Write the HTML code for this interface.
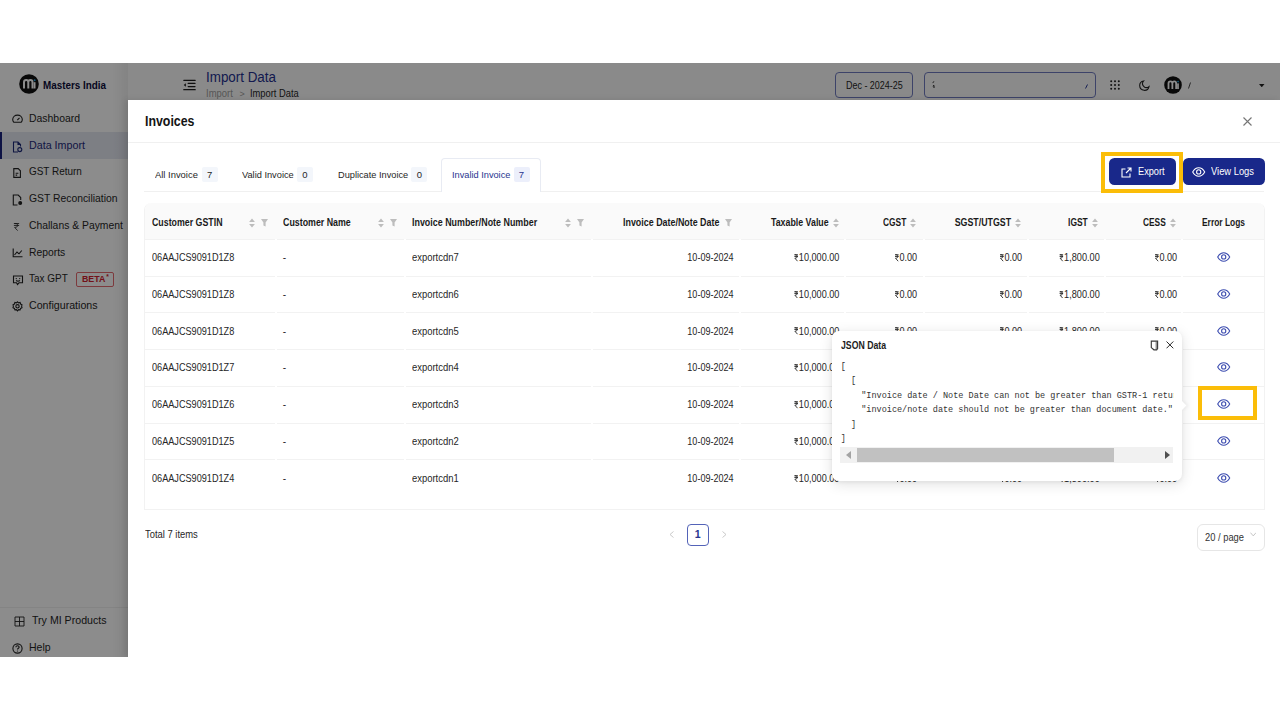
<!DOCTYPE html>
<html><head><meta charset="utf-8"><title>Invoices</title><style>
*{box-sizing:border-box;margin:0;padding:0}
html,body{width:1280px;height:720px;overflow:hidden;background:#fff;font-family:"Liberation Sans",sans-serif;color:#222}
div{position:absolute}
.t{white-space:nowrap}
.bl{display:inline-block;width:0;height:0;vertical-align:baseline}
.ico{line-height:0}.ico svg{display:block}
.side{left:0;top:63px;width:128px;height:594px;background:#fff}
.active-bg{left:0;top:132.3px;width:128px;height:26.5px;background:#e4e7f1}
.active-bar{left:0;top:132.3px;width:2px;height:26.5px;background:#1a237e}
.beta{left:75.8px;top:272px;width:38.3px;height:15px;border:1px solid #e46a70;border-radius:2px;color:#d0202e;font-size:8.8px;font-weight:700;padding:1.3px 0 0 5.2px;white-space:nowrap}
.beta span{position:absolute;left:29.5px;top:-0.5px;font-size:6.5px}
.sdiv{left:0;top:607px;width:128px;height:1px;background:#f0f0f0}
.hdr{left:128px;top:63px;width:1152px;height:37px;background:#fcfcfc}
.hbox{top:72.3px;height:26px;border:1.2px solid #6f7bc0;border-radius:4px}
.mask{left:0;top:63px;width:1280px;height:594px;background:rgba(0,0,0,0.45)}
.sideshadow{left:112px;top:63px;width:16px;height:594px;background:linear-gradient(to right,rgba(0,0,0,0),rgba(0,0,0,0.06))}
.drawer{left:128px;top:100px;width:1152px;height:557px;background:#fff;box-shadow:-3px 0 6px rgba(0,0,0,0.1)}
.ddiv{left:128px;top:141.5px;width:1152px;height:1px;background:#f0f0f0}
.tabline{left:144.2px;top:191px;width:1120.3px;height:1px;background:#f0f0f0}
.tabact{left:440.5px;top:158.3px;width:100px;height:33.5px;border:1px solid #e8ebf3;border-bottom:none;border-radius:4px 4px 0 0;background:#fff}
.badge{top:167px;width:16px;height:15.3px;background:#f3f6fb;border-radius:2px}
.badge.act{background:#eceffb}
.btn{top:158.4px;height:26.8px;background:#19288a;border-radius:5.5px}
.ybox{border:4px solid #fbbd08}
.tbl{border:1px solid #f2f2f2;border-top:none;border-radius:7px 7px 0 0;background:#fff}
.thead{background:#fafafa;border-radius:7px 7px 0 0}
.hl{height:1px;background:#f2f2f2}
.gap{width:2px;height:1px;background:#fff}
.rs{display:inline-block;vertical-align:baseline;margin-right:0.5px;position:relative;top:0.5px}
.pg1{left:687px;top:524.2px;width:21.6px;height:21.4px;border:1px solid #5363b8;border-radius:4px}
.psize{left:1197.3px;top:524.2px;width:67.3px;height:26.8px;border:1px solid #e6e6e6;border-radius:6px}
.pop{left:832px;top:330.6px;width:350px;height:150px;background:#fff;border-radius:7px;box-shadow:0 3px 14px rgba(0,0,0,0.12),0 1px 4px rgba(0,0,0,0.06)}
.parrow{left:345.5px;top:71.5px;width:7px;height:7px;background:#fff;transform:rotate(45deg);box-shadow:2px -2px 3px rgba(0,0,0,0.04)}
.pcode{left:840.8px;top:359.5px;width:333.1px;height:88px;overflow:hidden}
.pcode pre{font-family:"Liberation Mono",monospace;font-size:8.535px;line-height:14.6px;color:#333}
.sbar{left:840.4px;top:447.3px;width:333px;height:15.8px;background:#f1f1f1}
.sthumb{left:16.6px;top:0.8px;width:256.6px;height:13.9px;background:#c1c1c1}
</style></head>
<body>
<div style="left:0;top:63px;width:1280px;height:594px;overflow:hidden"><div style="left:0;top:-63px;width:1280px;height:720px">
<div class="side"></div>
<div class="ico" style="left:18.8px;top:73.5px"><svg width="20" height="20" viewBox="0 0 20 20"><circle cx="10" cy="10" r="9.8" fill="#111"/><path d="M5 14.5V8.2C5 6.8 6 6 7.2 6S9.3 6.8 9.3 8.2V14.5M9.3 8.2C9.3 6.8 10.3 6 11.5 6S13.5 6.8 13.5 8.2V14.5" fill="none" stroke="#fff" stroke-width="2"/><rect x="14.6" y="8.2" width="1.9" height="6.3" fill="#fff"/><circle cx="15.6" cy="6.2" r="1" fill="#29a8e0"/></svg></div>
<div class="t" id="t0" style="left:43.25px;font-size:11px;line-height:14px;font-weight:700;color:#0d0d3a;top:77.80px;transform:scaleX(0.8960);transform-origin:left center;">Masters India</div>
<div class="active-bg"></div><div class="active-bar"></div>
<div class="t" id="t1" style="left:29.3px;font-size:10.9px;line-height:14px;font-weight:400;color:#262626;top:111.01px;transform:scaleX(0.9572);transform-origin:left center;">Dashboard</div>
<div class="ico" style="left:11.5px;top:114.0px"><svg width="11" height="9" viewBox="0 0 11 9"><path d="M1.8 8.2C0.9 7.6 0.7 6.6 0.7 5.6A4.8 4.5 0 0 1 10.3 5.6C10.3 6.6 10.1 7.6 9.2 8.2Z" fill="none" stroke="#222" stroke-width="1.1"/><path d="M5.3 6.2L7.5 3.8" fill="none" stroke="#222" stroke-width="1.1"/></svg></div>
<div class="t" id="t2" style="left:29.3px;font-size:10.9px;line-height:14px;font-weight:400;color:#1f2a7a;top:137.90px;transform:scaleX(0.9841);transform-origin:left center;">Data Import</div>
<div class="ico" style="left:11.5px;top:140.9px"><svg width="11" height="12" viewBox="0 0 11 12"><path d="M6 11H1.5V1H6L8.5 3.5V5.5M6 1V3.5H8.5" fill="none" stroke="#1d2a78" stroke-width="1.1"/><circle cx="7.8" cy="8.6" r="2" fill="none" stroke="#1d2a78" stroke-width="1.1"/></svg></div>
<div class="t" id="t3" style="left:29.3px;font-size:10.9px;line-height:14px;font-weight:400;color:#262626;top:164.31px;transform:scaleX(0.9135);transform-origin:left center;">GST Return</div>
<div class="ico" style="left:11.5px;top:167.3px"><svg width="10" height="12" viewBox="0 0 10 12"><path d="M1.8 1.6H6.2L8.4 3.8V10.4H1.8Z" fill="none" stroke="#222" stroke-width="1.1"/><path d="M3.6 6.3H6.4M3.6 8.1H5.2" fill="none" stroke="#222" stroke-width="1.1"/></svg></div>
<div class="t" id="t4" style="left:29.3px;font-size:10.9px;line-height:14px;font-weight:400;color:#262626;top:191.20px;transform:scaleX(0.9513);transform-origin:left center;">GST Reconciliation</div>
<div class="ico" style="left:11.5px;top:194.2px"><svg width="11" height="12" viewBox="0 0 11 12"><path d="M5.5 11H1.3V1H6.2L8.7 3.5V6" fill="none" stroke="#222" stroke-width="1.1"/><circle cx="8.2" cy="9" r="2" fill="#222"/></svg></div>
<div class="t" id="t5" style="left:29.3px;font-size:10.9px;line-height:14px;font-weight:400;color:#262626;top:217.81px;transform:scaleX(0.9516);transform-origin:left center;">Challans &amp; Payment</div>
<div class="ico" style="left:11.5px;top:220.8px"><svg width="9" height="11" viewBox="-1.5 -2 12 14"><path d="M1 1H8M1 3.6H8M2 1C5.5 1 6.2 2.3 6.2 3.6S5 6.2 2 6.2L6 10.5" fill="none" stroke="#222" stroke-width="1.1"/></svg></div>
<div class="t" id="t6" style="left:29.3px;font-size:10.9px;line-height:14px;font-weight:400;color:#262626;top:244.61px;transform:scaleX(0.9491);transform-origin:left center;">Reports</div>
<div class="ico" style="left:11.5px;top:247.6px"><svg width="11" height="10" viewBox="0 0 11 10"><path d="M1.2 0.5V8.8H10.5" fill="none" stroke="#222" stroke-width="1.1"/><path d="M2.5 7L5 4L7 5.8L9.8 2.5" fill="none" stroke="#222" stroke-width="1.1"/></svg></div>
<div class="t" id="t7" style="left:29.3px;font-size:10.9px;line-height:14px;font-weight:400;color:#262626;top:271.11px;transform:scaleX(0.9156);transform-origin:left center;">Tax GPT</div>
<div class="ico" style="left:11.5px;top:274.1px"><svg width="12" height="12" viewBox="0 0 12 12"><path d="M1.5 2H10.5V8.8H7L5.5 10.5L4.5 8.8H1.5Z" fill="none" stroke="#222" stroke-width="1.1"/><circle cx="4.3" cy="4.6" r="0.7" fill="#222"/><circle cx="7.7" cy="4.6" r="0.7" fill="#222"/><path d="M4 6.5Q6 7.8 8 6.5" fill="none" stroke="#222" stroke-width="1.1"/></svg></div>
<div class="t" id="t8" style="left:29.3px;font-size:10.9px;line-height:14px;font-weight:400;color:#262626;top:298.11px;transform:scaleX(0.9767);transform-origin:left center;">Configurations</div>
<div class="ico" style="left:11.5px;top:301.1px"><svg width="11" height="11" viewBox="0 0 11 11"><path d="M5.5 0.8L6.6 1.8L8.1 1.5L8.6 3L10 3.7L9.6 5.2L10 6.7L8.6 7.4L8.1 8.9L6.6 8.6L5.5 9.9L4.4 8.6L2.9 8.9L2.4 7.4L1 6.7L1.4 5.2L1 3.7L2.4 3L2.9 1.5L4.4 1.8Z" fill="none" stroke="#222" stroke-width="1.1"/><circle cx="5.5" cy="5.3" r="1.7" fill="none" stroke="#222" stroke-width="1.1"/></svg></div>
<div class="beta">BETA<span>*</span></div>
<div class="sdiv"></div>
<div class="t" id="t9" style="left:31.6px;font-size:10.9px;line-height:14px;font-weight:400;color:#262626;top:613.01px;transform:scaleX(0.9745);transform-origin:left center;">Try MI Products</div>
<div class="ico" style="left:13.5px;top:616px"><svg width="11" height="11" viewBox="0 0 11 11"><path d="M1 1H10V10H1ZM5.5 1V10M1 5.5H10" fill="none" stroke="#222" stroke-width="0.9"/></svg></div>
<div class="t" id="t10" style="left:29.4px;font-size:10.9px;line-height:14px;font-weight:400;color:#262626;top:639.70px;transform:scaleX(0.9640);transform-origin:left center;">Help</div>
<div class="ico" style="left:12px;top:642.5px"><svg width="11" height="11" viewBox="0 0 11 11"><circle cx="5.5" cy="5.5" r="4.6" fill="none" stroke="#222" stroke-width="1.1"/><path d="M3.9 4.3C3.9 3.3 4.6 2.8 5.5 2.8S7.1 3.4 7.1 4.2C7.1 5.2 5.5 5.3 5.5 6.5" fill="none" stroke="#222" stroke-width="1.1"/><circle cx="5.5" cy="8" r="0.6" fill="#222"/></svg></div>
<div class="sideshadow"></div>
<div class="hdr"></div>
<div class="ico" style="left:183px;top:79px"><svg width="13" height="12" viewBox="0 0 13 12"><path d="M0.8 1.3H12.2M5.2 4.4H12M5.2 7.5H12M0.8 10.7H12.2" fill="none" stroke="#1e1e1e" stroke-width="1.25" stroke-linecap="round"/><path d="M0.7 5.95L2.9 4.2V7.7Z" fill="#1e1e1e"/></svg></div>
<div class="t" id="t11" style="left:206.3px;font-size:13.8px;line-height:17px;font-weight:400;color:#233090;top:69.21px;transform:scaleX(0.9712);transform-origin:left center;">Import Data</div>
<div class="t" id="t12" style="left:206.3px;font-size:10.2px;line-height:13px;font-weight:400;color:#9e9e9e;top:86.61px;transform:scaleX(0.9281);transform-origin:left center;">Import</div>
<div class="t" id="t13" style="left:239.6px;font-size:9px;line-height:11px;font-weight:400;color:#9e9e9e;top:88.61px;">&gt;</div>
<div class="t" id="t14" style="left:249.6px;font-size:10.2px;line-height:13px;font-weight:400;color:#262626;top:86.61px;transform:scaleX(0.9167);transform-origin:left center;">Import Data</div>
<div class="hbox" style="left:834.5px;width:78.5px"></div>
<div class="t" id="t15" style="left:845.7px;font-size:10.3px;line-height:13px;font-weight:400;color:#262626;top:78.91px;transform:scaleX(0.8688);transform-origin:left center;">Dec - 2024-25</div>
<div class="hbox" style="left:924px;width:171.5px"></div>
<div class="ico" style="left:932px;top:81.3px"><svg width="3" height="8" viewBox="0 0 3 8"><path d="M0.6 1.6L2.2 0.6M0.8 5.2L2 4.4L2 7" fill="none" stroke="#222" stroke-width="1"/></svg></div>
<div class="ico" style="left:1085px;top:83.5px"><svg width="3" height="5" viewBox="0 0 3 5"><path d="M0.5 4.5L2.5 0.5" stroke="#2b3a9a" stroke-width="1"/></svg></div>
<div class="ico" style="left:1110px;top:80px"><svg width="10" height="10" viewBox="0 0 10 10"><g fill="#222"><circle cx="1.2" cy="1.2" r="1"/><circle cx="5" cy="1.2" r="1"/><circle cx="8.8" cy="1.2" r="1"/><circle cx="1.2" cy="5" r="1"/><circle cx="5" cy="5" r="1"/><circle cx="8.8" cy="5" r="1"/><circle cx="1.2" cy="8.8" r="1"/><circle cx="5" cy="8.8" r="1"/><circle cx="8.8" cy="8.8" r="1"/></g></svg></div>
<div class="ico" style="left:1139px;top:79.5px"><svg width="11" height="11" viewBox="0 0 11 11"><path d="M4.6 1A4.7 4.7 0 1 0 10 6.6A3.9 3.9 0 0 1 4.6 1Z" fill="none" stroke="#222" stroke-width="1.1"/></svg></div>
<div class="ico" style="left:1164px;top:75.5px"><svg width="18" height="18" viewBox="0 0 20 20"><circle cx="10" cy="10" r="9.8" fill="#111"/><path d="M5 14.5V8.2C5 6.8 6 6 7.2 6S9.3 6.8 9.3 8.2V14.5M9.3 8.2C9.3 6.8 10.3 6 11.5 6S13.5 6.8 13.5 8.2V14.5" fill="none" stroke="#fff" stroke-width="2"/><rect x="14.6" y="8.2" width="1.9" height="6.3" fill="#fff"/><circle cx="15.6" cy="6.2" r="1" fill="#29a8e0"/></svg></div>
<div class="ico" style="left:1187.5px;top:81.5px"><svg width="3" height="7" viewBox="0 0 3 7"><path d="M0.5 6.5L2.5 0.5" stroke="#333" stroke-width="0.9"/></svg></div>
<div class="ico" style="left:1259px;top:83.6px"><svg width="5.5" height="3.4" viewBox="0 0 7 4"><path d="M0 0H7L3.5 4Z" fill="#222"/></svg></div>
<div class="mask"></div>
<div class="drawer"></div>
<div class="t" id="t16" style="left:144.5px;font-size:14.2px;line-height:18px;font-weight:700;color:#141414;top:111.91px;transform:scaleX(0.8718);transform-origin:left center;">Invoices</div>
<div class="ico" style="left:1242.5px;top:116.5px"><svg width="9" height="9" viewBox="0 0 9 9"><path d="M0.5 0.5L8.5 8.5M8.5 0.5L0.5 8.5" stroke="#757575" stroke-width="1.1"/></svg></div>
<div class="ddiv"></div><div class="tabline"></div><div class="tabact"></div>
<div class="t" id="t17" style="left:155px;font-size:9.5px;line-height:12px;font-weight:400;color:#262626;top:169.11px;transform:scaleX(0.9905);transform-origin:left center;">All Invoice</div><div class="badge" style="left:201.6px"></div><div class="t" id="t18" style="left:209.6px;font-size:9.5px;line-height:12px;font-weight:400;color:#262626;top:169.11px;margin-left:-2.65px;">7</div>
<div class="t" id="t19" style="left:241.5px;font-size:9.5px;line-height:12px;font-weight:400;color:#262626;top:169.11px;transform:scaleX(0.9723);transform-origin:left center;">Valid Invoice</div><div class="badge" style="left:296.8px"></div><div class="t" id="t20" style="left:304.8px;font-size:9.5px;line-height:12px;font-weight:400;color:#262626;top:169.11px;margin-left:-2.65px;">0</div>
<div class="t" id="t21" style="left:337.5px;font-size:9.5px;line-height:12px;font-weight:400;color:#262626;top:169.11px;transform:scaleX(0.9702);transform-origin:left center;">Duplicate Invoice</div><div class="badge" style="left:411.4px"></div><div class="t" id="t22" style="left:419.4px;font-size:9.5px;line-height:12px;font-weight:400;color:#262626;top:169.11px;margin-left:-2.65px;">0</div>
<div class="t" id="t23" style="left:451.8px;font-size:9.5px;line-height:12px;font-weight:400;color:#28358f;top:169.11px;transform:scaleX(0.9700);transform-origin:left center;">Invalid Invoice</div><div class="badge act" style="left:513.5px"></div><div class="t" id="t24" style="left:521.5px;font-size:9.5px;line-height:12px;font-weight:400;color:#28358f;top:169.11px;margin-left:-2.65px;">7</div>
<div class="btn" style="left:1109px;width:67px"></div>
<div class="ico" style="left:1121px;top:167.4px"><svg width="11" height="11" viewBox="0 0 11 11"><path d="M4.5 2H1V10H9V6.5" fill="none" stroke="#fff" stroke-width="1.1"/><path d="M5 6L10 1M6.5 1H10V4.5" fill="none" stroke="#fff" stroke-width="1.1"/></svg></div>
<div class="t" id="t25" style="left:1138.3px;font-size:10.4px;line-height:13px;font-weight:400;color:#fff;top:164.81px;transform:scaleX(0.8857);transform-origin:left center;">Export</div>
<div class="btn" style="left:1183px;width:81.7px"></div>
<div class="ico" style="left:1192px;top:167.4px"><svg width="14" height="10" viewBox="0 0 14 10"><path d="M0.7 5C2.4 1.9 4.5 0.8 6.7 0.8S11 1.9 12.7 5C11 8.1 8.9 9.2 6.7 9.2S2.4 8.1 0.7 5Z" fill="none" stroke="#fff" stroke-width="1.1"/><circle cx="6.7" cy="4.9" r="2.1" fill="none" stroke="#fff" stroke-width="1.1"/></svg></div>
<div class="t" id="t26" style="left:1211px;font-size:10.4px;line-height:13px;font-weight:400;color:#fff;top:164.81px;transform:scaleX(0.9002);transform-origin:left center;">View Logs</div>
<div class="ybox" style="left:1101px;top:151.8px;width:82.2px;height:41px"></div>
<div class="tbl" style="left:144px;top:202.5px;width:1121px;height:307.1px"></div>
<div class="thead" style="left:145px;top:203.0px;width:1119px;height:36.30000000000001px"></div>
<div class="t" id="t27" style="left:151.5px;font-size:10.2px;line-height:13px;font-weight:700;color:#1a1a1a;top:216.20px;transform:scaleX(0.8649);transform-origin:left center;">Customer GSTIN</div>
<div class="ico" style="left:248.5px;top:217.6px"><svg width="6" height="10" viewBox="0 0 6 10"><path d="M3 0.4L5.9 3.9H0.1Z M3 9.6L5.9 6.1H0.1Z" fill="#bdbdbd"/></svg></div><div class="ico" style="left:260.5px;top:218.6px"><svg width="7" height="8" viewBox="0 0 7 8"><path d="M0 0H7L4.6 3.4V7.4L2.4 6.6V3.4Z" fill="#bdbdbd"/></svg></div>
<div class="t" id="t28" style="left:282.7px;font-size:10.2px;line-height:13px;font-weight:700;color:#1a1a1a;top:216.20px;transform:scaleX(0.8677);transform-origin:left center;">Customer Name</div>
<div class="ico" style="left:378px;top:217.6px"><svg width="6" height="10" viewBox="0 0 6 10"><path d="M3 0.4L5.9 3.9H0.1Z M3 9.6L5.9 6.1H0.1Z" fill="#bdbdbd"/></svg></div><div class="ico" style="left:390px;top:218.6px"><svg width="7" height="8" viewBox="0 0 7 8"><path d="M0 0H7L4.6 3.4V7.4L2.4 6.6V3.4Z" fill="#bdbdbd"/></svg></div>
<div class="t" id="t29" style="left:412.4px;font-size:10.2px;line-height:13px;font-weight:700;color:#1a1a1a;top:216.20px;transform:scaleX(0.8735);transform-origin:left center;">Invoice Number/Note Number</div>
<div class="ico" style="left:565px;top:217.6px"><svg width="6" height="10" viewBox="0 0 6 10"><path d="M3 0.4L5.9 3.9H0.1Z M3 9.6L5.9 6.1H0.1Z" fill="#bdbdbd"/></svg></div><div class="ico" style="left:577px;top:218.6px"><svg width="7" height="8" viewBox="0 0 7 8"><path d="M0 0H7L4.6 3.4V7.4L2.4 6.6V3.4Z" fill="#bdbdbd"/></svg></div>
<div class="t" id="t30" style="right:560.2px;font-size:10.2px;line-height:13px;font-weight:700;color:#1a1a1a;top:216.20px;transform:scaleX(0.8731);transform-origin:right center;">Invoice Date/Note Date</div>
<div class="ico" style="left:724.5px;top:218.6px"><svg width="7" height="8" viewBox="0 0 7 8"><path d="M0 0H7L4.6 3.4V7.4L2.4 6.6V3.4Z" fill="#bdbdbd"/></svg></div>
<div class="t" id="t31" style="right:451.29999999999995px;font-size:10.2px;line-height:13px;font-weight:700;color:#1a1a1a;top:216.20px;transform:scaleX(0.8658);transform-origin:right center;">Taxable Value</div>
<div class="ico" style="left:832.5px;top:217.6px"><svg width="6" height="10" viewBox="0 0 6 10"><path d="M3 0.4L5.9 3.9H0.1Z M3 9.6L5.9 6.1H0.1Z" fill="#bdbdbd"/></svg></div>
<div class="t" id="t32" style="right:374.1px;font-size:10.2px;line-height:13px;font-weight:700;color:#1a1a1a;top:216.20px;transform:scaleX(0.8230);transform-origin:right center;">CGST</div>
<div class="ico" style="left:909.5px;top:217.6px"><svg width="6" height="10" viewBox="0 0 6 10"><path d="M3 0.4L5.9 3.9H0.1Z M3 9.6L5.9 6.1H0.1Z" fill="#bdbdbd"/></svg></div>
<div class="t" id="t33" style="right:269.20000000000005px;font-size:10.2px;line-height:13px;font-weight:700;color:#1a1a1a;top:216.20px;transform:scaleX(0.8664);transform-origin:right center;">SGST/UTGST</div>
<div class="ico" style="left:1014.5px;top:217.6px"><svg width="6" height="10" viewBox="0 0 6 10"><path d="M3 0.4L5.9 3.9H0.1Z M3 9.6L5.9 6.1H0.1Z" fill="#bdbdbd"/></svg></div>
<div class="t" id="t34" style="right:192px;font-size:10.2px;line-height:13px;font-weight:700;color:#1a1a1a;top:216.20px;transform:scaleX(0.8284);transform-origin:right center;">IGST</div>
<div class="ico" style="left:1091.5px;top:217.6px"><svg width="6" height="10" viewBox="0 0 6 10"><path d="M3 0.4L5.9 3.9H0.1Z M3 9.6L5.9 6.1H0.1Z" fill="#bdbdbd"/></svg></div>
<div class="t" id="t35" style="right:114.20000000000005px;font-size:10.2px;line-height:13px;font-weight:700;color:#1a1a1a;top:216.20px;transform:scaleX(0.8216);transform-origin:right center;">CESS</div>
<div class="ico" style="left:1169.5px;top:217.6px"><svg width="6" height="10" viewBox="0 0 6 10"><path d="M3 0.4L5.9 3.9H0.1Z M3 9.6L5.9 6.1H0.1Z" fill="#bdbdbd"/></svg></div>
<div class="t" id="t36" style="left:1202px;font-size:10.2px;line-height:13px;font-weight:700;color:#1a1a1a;top:216.20px;transform:scaleX(0.8257);transform-origin:left center;">Error Logs</div>
<div class="hl" style="left:145px;top:238.8px;width:1119px"></div>
<div class="gap" style="left:275px;top:238.8px"></div>
<div class="gap" style="left:404.4px;top:238.8px"></div>
<div class="gap" style="left:591.3px;top:238.8px"></div>
<div class="gap" style="left:739px;top:238.8px"></div>
<div class="gap" style="left:844.4px;top:238.8px"></div>
<div class="gap" style="left:922.7px;top:238.8px"></div>
<div class="gap" style="left:1026.6px;top:238.8px"></div>
<div class="gap" style="left:1103.7px;top:238.8px"></div>
<div class="gap" style="left:1180.9px;top:238.8px"></div>
<div class="hl" style="left:145px;top:275.55px;width:1119px"></div>
<div class="gap" style="left:275px;top:275.55px"></div>
<div class="gap" style="left:404.4px;top:275.55px"></div>
<div class="gap" style="left:591.3px;top:275.55px"></div>
<div class="gap" style="left:739px;top:275.55px"></div>
<div class="gap" style="left:844.4px;top:275.55px"></div>
<div class="gap" style="left:922.7px;top:275.55px"></div>
<div class="gap" style="left:1026.6px;top:275.55px"></div>
<div class="gap" style="left:1103.7px;top:275.55px"></div>
<div class="gap" style="left:1180.9px;top:275.55px"></div>
<div class="t" id="t37" style="left:151.5px;font-size:10.1px;line-height:13px;font-weight:400;color:#262626;top:251.01px;transform:scaleX(0.9048);transform-origin:left center;">06AAJCS9091D1Z8</div>
<div class="t" id="t38" style="left:282.7px;font-size:10.1px;line-height:13px;font-weight:400;color:#262626;top:251.01px;">-</div>
<div class="t" id="t39" style="left:412.4px;font-size:10.1px;line-height:13px;font-weight:400;color:#262626;top:251.01px;transform:scaleX(0.9349);transform-origin:left center;">exportcdn7</div>
<div class="t" id="t40" style="right:546.8px;font-size:10.1px;line-height:13px;font-weight:400;color:#262626;top:251.01px;transform:scaleX(0.8966);transform-origin:right center;">10-09-2024</div>
<div class="t" id="t41" style="right:440.4px;font-size:10.1px;line-height:13px;font-weight:400;color:#262626;top:251.01px;transform:scaleX(0.9027);transform-origin:right center;"><svg class="rs" width="5" height="7.6" viewBox="0 0 10 16"><path d="M0.8 1.6H9.2M0.8 5.2H9.2M2 1.6C6.6 1.6 7.6 3.2 7.6 5.2S6.2 8.8 2 8.8L8.2 15.2" fill="none" stroke="currentColor" stroke-width="2"/></svg>10,000.00</div>
<div class="t" id="t42" style="right:363.20000000000005px;font-size:10.1px;line-height:13px;font-weight:400;color:#262626;top:251.01px;transform:scaleX(0.8984);transform-origin:right center;"><svg class="rs" width="5" height="7.6" viewBox="0 0 10 16"><path d="M0.8 1.6H9.2M0.8 5.2H9.2M2 1.6C6.6 1.6 7.6 3.2 7.6 5.2S6.2 8.8 2 8.8L8.2 15.2" fill="none" stroke="currentColor" stroke-width="2"/></svg>0.00</div>
<div class="t" id="t43" style="right:258.20000000000005px;font-size:10.1px;line-height:13px;font-weight:400;color:#262626;top:251.01px;transform:scaleX(0.8984);transform-origin:right center;"><svg class="rs" width="5" height="7.6" viewBox="0 0 10 16"><path d="M0.8 1.6H9.2M0.8 5.2H9.2M2 1.6C6.6 1.6 7.6 3.2 7.6 5.2S6.2 8.8 2 8.8L8.2 15.2" fill="none" stroke="currentColor" stroke-width="2"/></svg>0.00</div>
<div class="t" id="t44" style="right:180.5px;font-size:10.1px;line-height:13px;font-weight:400;color:#262626;top:251.01px;transform:scaleX(0.9085);transform-origin:right center;"><svg class="rs" width="5" height="7.6" viewBox="0 0 10 16"><path d="M0.8 1.6H9.2M0.8 5.2H9.2M2 1.6C6.6 1.6 7.6 3.2 7.6 5.2S6.2 8.8 2 8.8L8.2 15.2" fill="none" stroke="currentColor" stroke-width="2"/></svg>1,800.00</div>
<div class="t" id="t45" style="right:103.20000000000005px;font-size:10.1px;line-height:13px;font-weight:400;color:#262626;top:251.01px;transform:scaleX(0.8984);transform-origin:right center;"><svg class="rs" width="5" height="7.6" viewBox="0 0 10 16"><path d="M0.8 1.6H9.2M0.8 5.2H9.2M2 1.6C6.6 1.6 7.6 3.2 7.6 5.2S6.2 8.8 2 8.8L8.2 15.2" fill="none" stroke="currentColor" stroke-width="2"/></svg>0.00</div>
<div class="ico" style="left:1216.5px;top:252.175px"><svg width="14" height="10" viewBox="0 0 14 10"><path d="M0.7 5C2.4 1.9 4.5 0.8 6.7 0.8S11 1.9 12.7 5C11 8.1 8.9 9.2 6.7 9.2S2.4 8.1 0.7 5Z" fill="none" stroke="#3d4db0" stroke-width="1.1"/><circle cx="6.7" cy="4.9" r="2.1" fill="none" stroke="#3d4db0" stroke-width="1.1"/></svg></div>
<div class="hl" style="left:145px;top:312.3px;width:1119px"></div>
<div class="gap" style="left:275px;top:312.3px"></div>
<div class="gap" style="left:404.4px;top:312.3px"></div>
<div class="gap" style="left:591.3px;top:312.3px"></div>
<div class="gap" style="left:739px;top:312.3px"></div>
<div class="gap" style="left:844.4px;top:312.3px"></div>
<div class="gap" style="left:922.7px;top:312.3px"></div>
<div class="gap" style="left:1026.6px;top:312.3px"></div>
<div class="gap" style="left:1103.7px;top:312.3px"></div>
<div class="gap" style="left:1180.9px;top:312.3px"></div>
<div class="t" id="t46" style="left:151.5px;font-size:10.1px;line-height:13px;font-weight:400;color:#262626;top:287.79px;transform:scaleX(0.9048);transform-origin:left center;">06AAJCS9091D1Z8</div>
<div class="t" id="t47" style="left:282.7px;font-size:10.1px;line-height:13px;font-weight:400;color:#262626;top:287.79px;">-</div>
<div class="t" id="t48" style="left:412.4px;font-size:10.1px;line-height:13px;font-weight:400;color:#262626;top:287.79px;transform:scaleX(0.9349);transform-origin:left center;">exportcdn6</div>
<div class="t" id="t49" style="right:546.8px;font-size:10.1px;line-height:13px;font-weight:400;color:#262626;top:287.79px;transform:scaleX(0.8966);transform-origin:right center;">10-09-2024</div>
<div class="t" id="t50" style="right:440.4px;font-size:10.1px;line-height:13px;font-weight:400;color:#262626;top:287.79px;transform:scaleX(0.9027);transform-origin:right center;"><svg class="rs" width="5" height="7.6" viewBox="0 0 10 16"><path d="M0.8 1.6H9.2M0.8 5.2H9.2M2 1.6C6.6 1.6 7.6 3.2 7.6 5.2S6.2 8.8 2 8.8L8.2 15.2" fill="none" stroke="currentColor" stroke-width="2"/></svg>10,000.00</div>
<div class="t" id="t51" style="right:363.20000000000005px;font-size:10.1px;line-height:13px;font-weight:400;color:#262626;top:287.79px;transform:scaleX(0.8984);transform-origin:right center;"><svg class="rs" width="5" height="7.6" viewBox="0 0 10 16"><path d="M0.8 1.6H9.2M0.8 5.2H9.2M2 1.6C6.6 1.6 7.6 3.2 7.6 5.2S6.2 8.8 2 8.8L8.2 15.2" fill="none" stroke="currentColor" stroke-width="2"/></svg>0.00</div>
<div class="t" id="t52" style="right:258.20000000000005px;font-size:10.1px;line-height:13px;font-weight:400;color:#262626;top:287.79px;transform:scaleX(0.8984);transform-origin:right center;"><svg class="rs" width="5" height="7.6" viewBox="0 0 10 16"><path d="M0.8 1.6H9.2M0.8 5.2H9.2M2 1.6C6.6 1.6 7.6 3.2 7.6 5.2S6.2 8.8 2 8.8L8.2 15.2" fill="none" stroke="currentColor" stroke-width="2"/></svg>0.00</div>
<div class="t" id="t53" style="right:180.5px;font-size:10.1px;line-height:13px;font-weight:400;color:#262626;top:287.79px;transform:scaleX(0.9085);transform-origin:right center;"><svg class="rs" width="5" height="7.6" viewBox="0 0 10 16"><path d="M0.8 1.6H9.2M0.8 5.2H9.2M2 1.6C6.6 1.6 7.6 3.2 7.6 5.2S6.2 8.8 2 8.8L8.2 15.2" fill="none" stroke="currentColor" stroke-width="2"/></svg>1,800.00</div>
<div class="t" id="t54" style="right:103.20000000000005px;font-size:10.1px;line-height:13px;font-weight:400;color:#262626;top:287.79px;transform:scaleX(0.8984);transform-origin:right center;"><svg class="rs" width="5" height="7.6" viewBox="0 0 10 16"><path d="M0.8 1.6H9.2M0.8 5.2H9.2M2 1.6C6.6 1.6 7.6 3.2 7.6 5.2S6.2 8.8 2 8.8L8.2 15.2" fill="none" stroke="currentColor" stroke-width="2"/></svg>0.00</div>
<div class="ico" style="left:1216.5px;top:288.925px"><svg width="14" height="10" viewBox="0 0 14 10"><path d="M0.7 5C2.4 1.9 4.5 0.8 6.7 0.8S11 1.9 12.7 5C11 8.1 8.9 9.2 6.7 9.2S2.4 8.1 0.7 5Z" fill="none" stroke="#3d4db0" stroke-width="1.1"/><circle cx="6.7" cy="4.9" r="2.1" fill="none" stroke="#3d4db0" stroke-width="1.1"/></svg></div>
<div class="hl" style="left:145px;top:349.05px;width:1119px"></div>
<div class="gap" style="left:275px;top:349.05px"></div>
<div class="gap" style="left:404.4px;top:349.05px"></div>
<div class="gap" style="left:591.3px;top:349.05px"></div>
<div class="gap" style="left:739px;top:349.05px"></div>
<div class="gap" style="left:844.4px;top:349.05px"></div>
<div class="gap" style="left:922.7px;top:349.05px"></div>
<div class="gap" style="left:1026.6px;top:349.05px"></div>
<div class="gap" style="left:1103.7px;top:349.05px"></div>
<div class="gap" style="left:1180.9px;top:349.05px"></div>
<div class="t" id="t55" style="left:151.5px;font-size:10.1px;line-height:13px;font-weight:400;color:#262626;top:324.57px;transform:scaleX(0.9048);transform-origin:left center;">06AAJCS9091D1Z8</div>
<div class="t" id="t56" style="left:282.7px;font-size:10.1px;line-height:13px;font-weight:400;color:#262626;top:324.57px;">-</div>
<div class="t" id="t57" style="left:412.4px;font-size:10.1px;line-height:13px;font-weight:400;color:#262626;top:324.57px;transform:scaleX(0.9349);transform-origin:left center;">exportcdn5</div>
<div class="t" id="t58" style="right:546.8px;font-size:10.1px;line-height:13px;font-weight:400;color:#262626;top:324.57px;transform:scaleX(0.8966);transform-origin:right center;">10-09-2024</div>
<div class="t" id="t59" style="right:440.4px;font-size:10.1px;line-height:13px;font-weight:400;color:#262626;top:324.57px;transform:scaleX(0.9027);transform-origin:right center;"><svg class="rs" width="5" height="7.6" viewBox="0 0 10 16"><path d="M0.8 1.6H9.2M0.8 5.2H9.2M2 1.6C6.6 1.6 7.6 3.2 7.6 5.2S6.2 8.8 2 8.8L8.2 15.2" fill="none" stroke="currentColor" stroke-width="2"/></svg>10,000.00</div>
<div class="t" id="t60" style="right:363.20000000000005px;font-size:10.1px;line-height:13px;font-weight:400;color:#262626;top:324.57px;transform:scaleX(0.8984);transform-origin:right center;"><svg class="rs" width="5" height="7.6" viewBox="0 0 10 16"><path d="M0.8 1.6H9.2M0.8 5.2H9.2M2 1.6C6.6 1.6 7.6 3.2 7.6 5.2S6.2 8.8 2 8.8L8.2 15.2" fill="none" stroke="currentColor" stroke-width="2"/></svg>0.00</div>
<div class="t" id="t61" style="right:258.20000000000005px;font-size:10.1px;line-height:13px;font-weight:400;color:#262626;top:324.57px;transform:scaleX(0.8984);transform-origin:right center;"><svg class="rs" width="5" height="7.6" viewBox="0 0 10 16"><path d="M0.8 1.6H9.2M0.8 5.2H9.2M2 1.6C6.6 1.6 7.6 3.2 7.6 5.2S6.2 8.8 2 8.8L8.2 15.2" fill="none" stroke="currentColor" stroke-width="2"/></svg>0.00</div>
<div class="t" id="t62" style="right:180.5px;font-size:10.1px;line-height:13px;font-weight:400;color:#262626;top:324.57px;transform:scaleX(0.9085);transform-origin:right center;"><svg class="rs" width="5" height="7.6" viewBox="0 0 10 16"><path d="M0.8 1.6H9.2M0.8 5.2H9.2M2 1.6C6.6 1.6 7.6 3.2 7.6 5.2S6.2 8.8 2 8.8L8.2 15.2" fill="none" stroke="currentColor" stroke-width="2"/></svg>1,800.00</div>
<div class="t" id="t63" style="right:103.20000000000005px;font-size:10.1px;line-height:13px;font-weight:400;color:#262626;top:324.57px;transform:scaleX(0.8984);transform-origin:right center;"><svg class="rs" width="5" height="7.6" viewBox="0 0 10 16"><path d="M0.8 1.6H9.2M0.8 5.2H9.2M2 1.6C6.6 1.6 7.6 3.2 7.6 5.2S6.2 8.8 2 8.8L8.2 15.2" fill="none" stroke="currentColor" stroke-width="2"/></svg>0.00</div>
<div class="ico" style="left:1216.5px;top:325.675px"><svg width="14" height="10" viewBox="0 0 14 10"><path d="M0.7 5C2.4 1.9 4.5 0.8 6.7 0.8S11 1.9 12.7 5C11 8.1 8.9 9.2 6.7 9.2S2.4 8.1 0.7 5Z" fill="none" stroke="#3d4db0" stroke-width="1.1"/><circle cx="6.7" cy="4.9" r="2.1" fill="none" stroke="#3d4db0" stroke-width="1.1"/></svg></div>
<div class="hl" style="left:145px;top:385.8px;width:1119px"></div>
<div class="gap" style="left:275px;top:385.8px"></div>
<div class="gap" style="left:404.4px;top:385.8px"></div>
<div class="gap" style="left:591.3px;top:385.8px"></div>
<div class="gap" style="left:739px;top:385.8px"></div>
<div class="gap" style="left:844.4px;top:385.8px"></div>
<div class="gap" style="left:922.7px;top:385.8px"></div>
<div class="gap" style="left:1026.6px;top:385.8px"></div>
<div class="gap" style="left:1103.7px;top:385.8px"></div>
<div class="gap" style="left:1180.9px;top:385.8px"></div>
<div class="t" id="t64" style="left:151.5px;font-size:10.1px;line-height:13px;font-weight:400;color:#262626;top:361.35px;transform:scaleX(0.9048);transform-origin:left center;">06AAJCS9091D1Z7</div>
<div class="t" id="t65" style="left:282.7px;font-size:10.1px;line-height:13px;font-weight:400;color:#262626;top:361.35px;">-</div>
<div class="t" id="t66" style="left:412.4px;font-size:10.1px;line-height:13px;font-weight:400;color:#262626;top:361.35px;transform:scaleX(0.9349);transform-origin:left center;">exportcdn4</div>
<div class="t" id="t67" style="right:546.8px;font-size:10.1px;line-height:13px;font-weight:400;color:#262626;top:361.35px;transform:scaleX(0.8966);transform-origin:right center;">10-09-2024</div>
<div class="t" id="t68" style="right:440.4px;font-size:10.1px;line-height:13px;font-weight:400;color:#262626;top:361.35px;transform:scaleX(0.9027);transform-origin:right center;"><svg class="rs" width="5" height="7.6" viewBox="0 0 10 16"><path d="M0.8 1.6H9.2M0.8 5.2H9.2M2 1.6C6.6 1.6 7.6 3.2 7.6 5.2S6.2 8.8 2 8.8L8.2 15.2" fill="none" stroke="currentColor" stroke-width="2"/></svg>10,000.00</div>
<div class="t" id="t69" style="right:363.20000000000005px;font-size:10.1px;line-height:13px;font-weight:400;color:#262626;top:361.35px;transform:scaleX(0.8984);transform-origin:right center;"><svg class="rs" width="5" height="7.6" viewBox="0 0 10 16"><path d="M0.8 1.6H9.2M0.8 5.2H9.2M2 1.6C6.6 1.6 7.6 3.2 7.6 5.2S6.2 8.8 2 8.8L8.2 15.2" fill="none" stroke="currentColor" stroke-width="2"/></svg>0.00</div>
<div class="t" id="t70" style="right:258.20000000000005px;font-size:10.1px;line-height:13px;font-weight:400;color:#262626;top:361.35px;transform:scaleX(0.8984);transform-origin:right center;"><svg class="rs" width="5" height="7.6" viewBox="0 0 10 16"><path d="M0.8 1.6H9.2M0.8 5.2H9.2M2 1.6C6.6 1.6 7.6 3.2 7.6 5.2S6.2 8.8 2 8.8L8.2 15.2" fill="none" stroke="currentColor" stroke-width="2"/></svg>0.00</div>
<div class="t" id="t71" style="right:180.5px;font-size:10.1px;line-height:13px;font-weight:400;color:#262626;top:361.35px;transform:scaleX(0.9085);transform-origin:right center;"><svg class="rs" width="5" height="7.6" viewBox="0 0 10 16"><path d="M0.8 1.6H9.2M0.8 5.2H9.2M2 1.6C6.6 1.6 7.6 3.2 7.6 5.2S6.2 8.8 2 8.8L8.2 15.2" fill="none" stroke="currentColor" stroke-width="2"/></svg>1,800.00</div>
<div class="t" id="t72" style="right:103.20000000000005px;font-size:10.1px;line-height:13px;font-weight:400;color:#262626;top:361.35px;transform:scaleX(0.8984);transform-origin:right center;"><svg class="rs" width="5" height="7.6" viewBox="0 0 10 16"><path d="M0.8 1.6H9.2M0.8 5.2H9.2M2 1.6C6.6 1.6 7.6 3.2 7.6 5.2S6.2 8.8 2 8.8L8.2 15.2" fill="none" stroke="currentColor" stroke-width="2"/></svg>0.00</div>
<div class="ico" style="left:1216.5px;top:362.425px"><svg width="14" height="10" viewBox="0 0 14 10"><path d="M0.7 5C2.4 1.9 4.5 0.8 6.7 0.8S11 1.9 12.7 5C11 8.1 8.9 9.2 6.7 9.2S2.4 8.1 0.7 5Z" fill="none" stroke="#3d4db0" stroke-width="1.1"/><circle cx="6.7" cy="4.9" r="2.1" fill="none" stroke="#3d4db0" stroke-width="1.1"/></svg></div>
<div class="hl" style="left:145px;top:422.55px;width:1119px"></div>
<div class="gap" style="left:275px;top:422.55px"></div>
<div class="gap" style="left:404.4px;top:422.55px"></div>
<div class="gap" style="left:591.3px;top:422.55px"></div>
<div class="gap" style="left:739px;top:422.55px"></div>
<div class="gap" style="left:844.4px;top:422.55px"></div>
<div class="gap" style="left:922.7px;top:422.55px"></div>
<div class="gap" style="left:1026.6px;top:422.55px"></div>
<div class="gap" style="left:1103.7px;top:422.55px"></div>
<div class="gap" style="left:1180.9px;top:422.55px"></div>
<div class="t" id="t73" style="left:151.5px;font-size:10.1px;line-height:13px;font-weight:400;color:#262626;top:398.12px;transform:scaleX(0.9048);transform-origin:left center;">06AAJCS9091D1Z6</div>
<div class="t" id="t74" style="left:282.7px;font-size:10.1px;line-height:13px;font-weight:400;color:#262626;top:398.12px;">-</div>
<div class="t" id="t75" style="left:412.4px;font-size:10.1px;line-height:13px;font-weight:400;color:#262626;top:398.12px;transform:scaleX(0.9349);transform-origin:left center;">exportcdn3</div>
<div class="t" id="t76" style="right:546.8px;font-size:10.1px;line-height:13px;font-weight:400;color:#262626;top:398.12px;transform:scaleX(0.8966);transform-origin:right center;">10-09-2024</div>
<div class="t" id="t77" style="right:440.4px;font-size:10.1px;line-height:13px;font-weight:400;color:#262626;top:398.12px;transform:scaleX(0.9027);transform-origin:right center;"><svg class="rs" width="5" height="7.6" viewBox="0 0 10 16"><path d="M0.8 1.6H9.2M0.8 5.2H9.2M2 1.6C6.6 1.6 7.6 3.2 7.6 5.2S6.2 8.8 2 8.8L8.2 15.2" fill="none" stroke="currentColor" stroke-width="2"/></svg>10,000.00</div>
<div class="t" id="t78" style="right:363.20000000000005px;font-size:10.1px;line-height:13px;font-weight:400;color:#262626;top:398.12px;transform:scaleX(0.8984);transform-origin:right center;"><svg class="rs" width="5" height="7.6" viewBox="0 0 10 16"><path d="M0.8 1.6H9.2M0.8 5.2H9.2M2 1.6C6.6 1.6 7.6 3.2 7.6 5.2S6.2 8.8 2 8.8L8.2 15.2" fill="none" stroke="currentColor" stroke-width="2"/></svg>0.00</div>
<div class="t" id="t79" style="right:258.20000000000005px;font-size:10.1px;line-height:13px;font-weight:400;color:#262626;top:398.12px;transform:scaleX(0.8984);transform-origin:right center;"><svg class="rs" width="5" height="7.6" viewBox="0 0 10 16"><path d="M0.8 1.6H9.2M0.8 5.2H9.2M2 1.6C6.6 1.6 7.6 3.2 7.6 5.2S6.2 8.8 2 8.8L8.2 15.2" fill="none" stroke="currentColor" stroke-width="2"/></svg>0.00</div>
<div class="t" id="t80" style="right:180.5px;font-size:10.1px;line-height:13px;font-weight:400;color:#262626;top:398.12px;transform:scaleX(0.9085);transform-origin:right center;"><svg class="rs" width="5" height="7.6" viewBox="0 0 10 16"><path d="M0.8 1.6H9.2M0.8 5.2H9.2M2 1.6C6.6 1.6 7.6 3.2 7.6 5.2S6.2 8.8 2 8.8L8.2 15.2" fill="none" stroke="currentColor" stroke-width="2"/></svg>1,800.00</div>
<div class="t" id="t81" style="right:103.20000000000005px;font-size:10.1px;line-height:13px;font-weight:400;color:#262626;top:398.12px;transform:scaleX(0.8984);transform-origin:right center;"><svg class="rs" width="5" height="7.6" viewBox="0 0 10 16"><path d="M0.8 1.6H9.2M0.8 5.2H9.2M2 1.6C6.6 1.6 7.6 3.2 7.6 5.2S6.2 8.8 2 8.8L8.2 15.2" fill="none" stroke="currentColor" stroke-width="2"/></svg>0.00</div>
<div class="ico" style="left:1216.5px;top:399.175px"><svg width="14" height="10" viewBox="0 0 14 10"><path d="M0.7 5C2.4 1.9 4.5 0.8 6.7 0.8S11 1.9 12.7 5C11 8.1 8.9 9.2 6.7 9.2S2.4 8.1 0.7 5Z" fill="none" stroke="#3d4db0" stroke-width="1.1"/><circle cx="6.7" cy="4.9" r="2.1" fill="none" stroke="#3d4db0" stroke-width="1.1"/></svg></div>
<div class="hl" style="left:145px;top:459.3px;width:1119px"></div>
<div class="gap" style="left:275px;top:459.3px"></div>
<div class="gap" style="left:404.4px;top:459.3px"></div>
<div class="gap" style="left:591.3px;top:459.3px"></div>
<div class="gap" style="left:739px;top:459.3px"></div>
<div class="gap" style="left:844.4px;top:459.3px"></div>
<div class="gap" style="left:922.7px;top:459.3px"></div>
<div class="gap" style="left:1026.6px;top:459.3px"></div>
<div class="gap" style="left:1103.7px;top:459.3px"></div>
<div class="gap" style="left:1180.9px;top:459.3px"></div>
<div class="t" id="t82" style="left:151.5px;font-size:10.1px;line-height:13px;font-weight:400;color:#262626;top:434.90px;transform:scaleX(0.9048);transform-origin:left center;">06AAJCS9091D1Z5</div>
<div class="t" id="t83" style="left:282.7px;font-size:10.1px;line-height:13px;font-weight:400;color:#262626;top:434.90px;">-</div>
<div class="t" id="t84" style="left:412.4px;font-size:10.1px;line-height:13px;font-weight:400;color:#262626;top:434.90px;transform:scaleX(0.9349);transform-origin:left center;">exportcdn2</div>
<div class="t" id="t85" style="right:546.8px;font-size:10.1px;line-height:13px;font-weight:400;color:#262626;top:434.90px;transform:scaleX(0.8966);transform-origin:right center;">10-09-2024</div>
<div class="t" id="t86" style="right:440.4px;font-size:10.1px;line-height:13px;font-weight:400;color:#262626;top:434.90px;transform:scaleX(0.9027);transform-origin:right center;"><svg class="rs" width="5" height="7.6" viewBox="0 0 10 16"><path d="M0.8 1.6H9.2M0.8 5.2H9.2M2 1.6C6.6 1.6 7.6 3.2 7.6 5.2S6.2 8.8 2 8.8L8.2 15.2" fill="none" stroke="currentColor" stroke-width="2"/></svg>10,000.00</div>
<div class="t" id="t87" style="right:363.20000000000005px;font-size:10.1px;line-height:13px;font-weight:400;color:#262626;top:434.90px;transform:scaleX(0.8984);transform-origin:right center;"><svg class="rs" width="5" height="7.6" viewBox="0 0 10 16"><path d="M0.8 1.6H9.2M0.8 5.2H9.2M2 1.6C6.6 1.6 7.6 3.2 7.6 5.2S6.2 8.8 2 8.8L8.2 15.2" fill="none" stroke="currentColor" stroke-width="2"/></svg>0.00</div>
<div class="t" id="t88" style="right:258.20000000000005px;font-size:10.1px;line-height:13px;font-weight:400;color:#262626;top:434.90px;transform:scaleX(0.8984);transform-origin:right center;"><svg class="rs" width="5" height="7.6" viewBox="0 0 10 16"><path d="M0.8 1.6H9.2M0.8 5.2H9.2M2 1.6C6.6 1.6 7.6 3.2 7.6 5.2S6.2 8.8 2 8.8L8.2 15.2" fill="none" stroke="currentColor" stroke-width="2"/></svg>0.00</div>
<div class="t" id="t89" style="right:180.5px;font-size:10.1px;line-height:13px;font-weight:400;color:#262626;top:434.90px;transform:scaleX(0.9085);transform-origin:right center;"><svg class="rs" width="5" height="7.6" viewBox="0 0 10 16"><path d="M0.8 1.6H9.2M0.8 5.2H9.2M2 1.6C6.6 1.6 7.6 3.2 7.6 5.2S6.2 8.8 2 8.8L8.2 15.2" fill="none" stroke="currentColor" stroke-width="2"/></svg>1,800.00</div>
<div class="t" id="t90" style="right:103.20000000000005px;font-size:10.1px;line-height:13px;font-weight:400;color:#262626;top:434.90px;transform:scaleX(0.8984);transform-origin:right center;"><svg class="rs" width="5" height="7.6" viewBox="0 0 10 16"><path d="M0.8 1.6H9.2M0.8 5.2H9.2M2 1.6C6.6 1.6 7.6 3.2 7.6 5.2S6.2 8.8 2 8.8L8.2 15.2" fill="none" stroke="currentColor" stroke-width="2"/></svg>0.00</div>
<div class="ico" style="left:1216.5px;top:435.925px"><svg width="14" height="10" viewBox="0 0 14 10"><path d="M0.7 5C2.4 1.9 4.5 0.8 6.7 0.8S11 1.9 12.7 5C11 8.1 8.9 9.2 6.7 9.2S2.4 8.1 0.7 5Z" fill="none" stroke="#3d4db0" stroke-width="1.1"/><circle cx="6.7" cy="4.9" r="2.1" fill="none" stroke="#3d4db0" stroke-width="1.1"/></svg></div>
<div class="t" id="t91" style="left:151.5px;font-size:10.1px;line-height:13px;font-weight:400;color:#262626;top:471.68px;transform:scaleX(0.9048);transform-origin:left center;">06AAJCS9091D1Z4</div>
<div class="t" id="t92" style="left:282.7px;font-size:10.1px;line-height:13px;font-weight:400;color:#262626;top:471.68px;">-</div>
<div class="t" id="t93" style="left:412.4px;font-size:10.1px;line-height:13px;font-weight:400;color:#262626;top:471.68px;transform:scaleX(0.9349);transform-origin:left center;">exportcdn1</div>
<div class="t" id="t94" style="right:546.8px;font-size:10.1px;line-height:13px;font-weight:400;color:#262626;top:471.68px;transform:scaleX(0.8966);transform-origin:right center;">10-09-2024</div>
<div class="t" id="t95" style="right:440.4px;font-size:10.1px;line-height:13px;font-weight:400;color:#262626;top:471.68px;transform:scaleX(0.9027);transform-origin:right center;"><svg class="rs" width="5" height="7.6" viewBox="0 0 10 16"><path d="M0.8 1.6H9.2M0.8 5.2H9.2M2 1.6C6.6 1.6 7.6 3.2 7.6 5.2S6.2 8.8 2 8.8L8.2 15.2" fill="none" stroke="currentColor" stroke-width="2"/></svg>10,000.00</div>
<div class="t" id="t96" style="right:363.20000000000005px;font-size:10.1px;line-height:13px;font-weight:400;color:#262626;top:471.68px;transform:scaleX(0.8984);transform-origin:right center;"><svg class="rs" width="5" height="7.6" viewBox="0 0 10 16"><path d="M0.8 1.6H9.2M0.8 5.2H9.2M2 1.6C6.6 1.6 7.6 3.2 7.6 5.2S6.2 8.8 2 8.8L8.2 15.2" fill="none" stroke="currentColor" stroke-width="2"/></svg>0.00</div>
<div class="t" id="t97" style="right:258.20000000000005px;font-size:10.1px;line-height:13px;font-weight:400;color:#262626;top:471.68px;transform:scaleX(0.8984);transform-origin:right center;"><svg class="rs" width="5" height="7.6" viewBox="0 0 10 16"><path d="M0.8 1.6H9.2M0.8 5.2H9.2M2 1.6C6.6 1.6 7.6 3.2 7.6 5.2S6.2 8.8 2 8.8L8.2 15.2" fill="none" stroke="currentColor" stroke-width="2"/></svg>0.00</div>
<div class="t" id="t98" style="right:180.5px;font-size:10.1px;line-height:13px;font-weight:400;color:#262626;top:471.68px;transform:scaleX(0.9085);transform-origin:right center;"><svg class="rs" width="5" height="7.6" viewBox="0 0 10 16"><path d="M0.8 1.6H9.2M0.8 5.2H9.2M2 1.6C6.6 1.6 7.6 3.2 7.6 5.2S6.2 8.8 2 8.8L8.2 15.2" fill="none" stroke="currentColor" stroke-width="2"/></svg>1,800.00</div>
<div class="t" id="t99" style="right:103.20000000000005px;font-size:10.1px;line-height:13px;font-weight:400;color:#262626;top:471.68px;transform:scaleX(0.8984);transform-origin:right center;"><svg class="rs" width="5" height="7.6" viewBox="0 0 10 16"><path d="M0.8 1.6H9.2M0.8 5.2H9.2M2 1.6C6.6 1.6 7.6 3.2 7.6 5.2S6.2 8.8 2 8.8L8.2 15.2" fill="none" stroke="currentColor" stroke-width="2"/></svg>0.00</div>
<div class="ico" style="left:1216.5px;top:472.675px"><svg width="14" height="10" viewBox="0 0 14 10"><path d="M0.7 5C2.4 1.9 4.5 0.8 6.7 0.8S11 1.9 12.7 5C11 8.1 8.9 9.2 6.7 9.2S2.4 8.1 0.7 5Z" fill="none" stroke="#3d4db0" stroke-width="1.1"/><circle cx="6.7" cy="4.9" r="2.1" fill="none" stroke="#3d4db0" stroke-width="1.1"/></svg></div>
<div class="ybox" style="left:1198px;top:386.2px;width:58.7px;height:34.3px"></div>
<div class="t" id="t100" style="left:145px;font-size:10.3px;line-height:13px;font-weight:400;color:#262626;top:527.60px;transform:scaleX(0.9133);transform-origin:left center;">Total 7 items</div>
<div class="ico" style="left:668.5px;top:531px"><svg width="5" height="7" viewBox="0 0 5 7"><path d="M4.5 0.5L1 3.5L4.5 6.5" fill="none" stroke="#c4c4c4" stroke-width="0.9"/></svg></div>
<div class="pg1"></div>
<div class="t" id="t101" style="left:697.8px;font-size:10.6px;line-height:13px;font-weight:700;color:#28358f;top:527.90px;margin-left:-2.95px;">1</div>
<div class="ico" style="left:722px;top:531px"><svg width="5" height="7" viewBox="0 0 5 7"><path d="M0.5 0.5L4 3.5L0.5 6.5" fill="none" stroke="#c4c4c4" stroke-width="0.9"/></svg></div>
<div class="psize"></div>
<div class="t" id="t102" style="left:1205.2px;font-size:10.1px;line-height:13px;font-weight:400;color:#333;top:530.90px;transform:scaleX(0.9262);transform-origin:left center;">20 / page</div>
<div class="ico" style="left:1249.6px;top:531.8px"><svg width="6.5" height="5" viewBox="0 0 7 5"><path d="M0.5 0.5L3.5 4L6.5 0.5" fill="none" stroke="#bbb" stroke-width="0.9"/></svg></div>
<div class="pop"><div class="parrow"></div></div>
<div class="t" id="t103" style="left:840.75px;font-size:10.0px;line-height:12px;font-weight:700;color:#1c1c1c;top:340.00px;transform:scaleX(0.8706);transform-origin:left center;">JSON Data</div>
<div class="ico" style="left:1150px;top:339.5px"><svg width="9" height="11" viewBox="0 0 9 11"><path d="M1.3 1.1H7.6V8.6L6.7 9.8H3.9L1.3 7.6Z" fill="none" stroke="#3a3a3a" stroke-width="1.15"/><path d="M6.2 1.6V9.4" stroke="#3a3a3a" stroke-width="0.8"/></svg></div>
<div class="ico" style="left:1165.5px;top:341px"><svg width="8" height="8" viewBox="0 0 8 8"><path d="M0.5 0.5L7.3 7.3M7.3 0.5L0.5 7.3" stroke="#2a2a2a" stroke-width="1"/></svg></div>
<div class="pcode"><pre>[
  [
    "Invoice date / Note Date can not be greater than GSTR-1 return period.",
    "invoice/note date should not be greater than document date."
  ]
]</pre></div>
<div class="sbar"><div class="sthumb"></div><svg style="position:absolute;left:6px;top:4px" width="5" height="8" viewBox="0 0 5 8"><path d="M5 0V8L0 4Z" fill="#a3a3a3"/></svg><svg style="position:absolute;left:324.5px;top:4px" width="5" height="8" viewBox="0 0 5 8"><path d="M0 0V8L5 4Z" fill="#505050"/></svg></div>
</div></div>
</body></html>
